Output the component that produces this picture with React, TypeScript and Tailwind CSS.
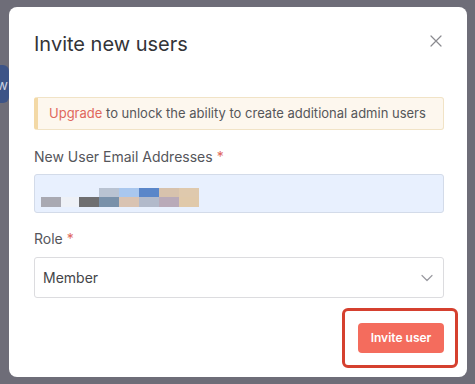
import React from "react";

const mosaicRow1 = [
  { x: 99, c: "#b9c3d2" },
  { x: 119, c: "#a9c7ee" },
  { x: 139, c: "#5a86c9" },
  { x: 159, c: "#d7c2ad" },
  { x: 179, c: "#dfc9ad" },
];
const mosaicRow2 = [
  { x: 41, c: "#a9a9b2" },
  { x: 61, c: "#eef1f7" },
  { x: 79, c: "#6f6f71" },
  { x: 99, c: "#7991aa" },
  { x: 119, c: "#d9c3b2" },
  { x: 139, c: "#b2bacb" },
  { x: 159, c: "#b9aab9" },
  { x: 179, c: "#e0c9aa" },
];

export default function App() {
  return (
    <div
      className="relative w-[475px] h-[384px] overflow-hidden bg-[#6e6d78]"
      style={{ fontFamily: "Inter, 'Noto Sans', sans-serif" }}
    >
      {/* dimmed background button */}
      <div className="absolute left-[-40px] top-[65px] w-[49px] h-[38px] rounded-[6px] bg-[#3d5487] flex items-center justify-end pr-[1px] text-[#c9cfe0] text-[14px]">
        w
      </div>

      <div className="absolute left-[9px] top-[7px] w-[458px] h-[370px] bg-white rounded-[8px] pl-[25px] pr-[23px] pt-[23px]">
        <div className="flex items-center justify-between h-[28px]">
          <h2 className="text-[20px] leading-[28px] text-[#333438] font-normal">
            Invite new users
          </h2>
          <svg
            width="12"
            height="12"
            viewBox="0 0 12 12"
            className="mr-[2px] mt-[-6px]"
          >
            <path
              d="M1 1 L11 11 M11 1 L1 11"
              stroke="#8a8a8f"
              strokeWidth="1.2"
              strokeLinecap="round"
            />
          </svg>
        </div>

        <div className="mt-[39px] h-[33px] flex items-center rounded-[3px] border border-[#f1e3c6] border-l-[4px] border-l-[#f3d9a6] bg-[#fdf7ee] pl-[11px] text-[13px] text-[#555659]">
          <span className="text-[#e0675c]">Upgrade</span>
          <span>&nbsp;to unlock the ability to create additional admin users</span>
        </div>

        <div className="mt-[16px] h-[20px] flex items-center text-[14px] text-[#55565b]">
          New User Email Addresses<span className="text-[#e0675c] ml-[4px]">*</span>
        </div>

        <div className="relative mt-[8px] h-[39px] rounded-[3px] border border-[#d3dbe9] bg-[#e8f0fe]">
          {mosaicRow1.map((b, i) => (
            <div
              key={"a" + i}
              className="absolute h-[9px] w-[20px]"
              style={{ left: b.x - 35, top: 188 - 175, background: b.c }}
            />
          ))}
          {mosaicRow2.map((b, i) => (
            <div
              key={"b" + i}
              className="absolute h-[10px]"
              style={{
                left: b.x - 35,
                top: 197 - 175,
                width: i === 1 ? 18 : 20,
                background: b.c,
              }}
            />
          ))}
        </div>

        <div className="mt-[15px] h-[20px] flex items-center text-[14px] text-[#55565b]">
          Role<span className="text-[#e0675c] ml-[4px]">*</span>
        </div>

        <div className="mt-[9px] h-[41px] rounded-[3px] border border-[#dcdcdf] bg-white flex items-center justify-between pl-[8px] pr-[10px]">
          <span className="text-[14px] text-[#444549]">Member</span>
          <svg width="12" height="8" viewBox="0 0 12 8">
            <path
              d="M1 1.5 L6 6.5 L11 1.5"
              fill="none"
              stroke="#9a9aa0"
              strokeWidth="1.2"
              strokeLinecap="round"
              strokeLinejoin="round"
            />
          </svg>
        </div>

        <div className="mt-[25px] flex justify-end">
          <div className="relative">
            <button className="h-[30px] w-[86px] rounded-[4px] bg-[#f46c5d] text-white text-[12px] font-semibold">
              Invite user
            </button>
            <div className="absolute left-[-16px] top-[-15px] w-[116px] h-[60px] rounded-[6px] border-[3px] border-[#d5402f]" />
          </div>
        </div>
      </div>
    </div>
  );
}
